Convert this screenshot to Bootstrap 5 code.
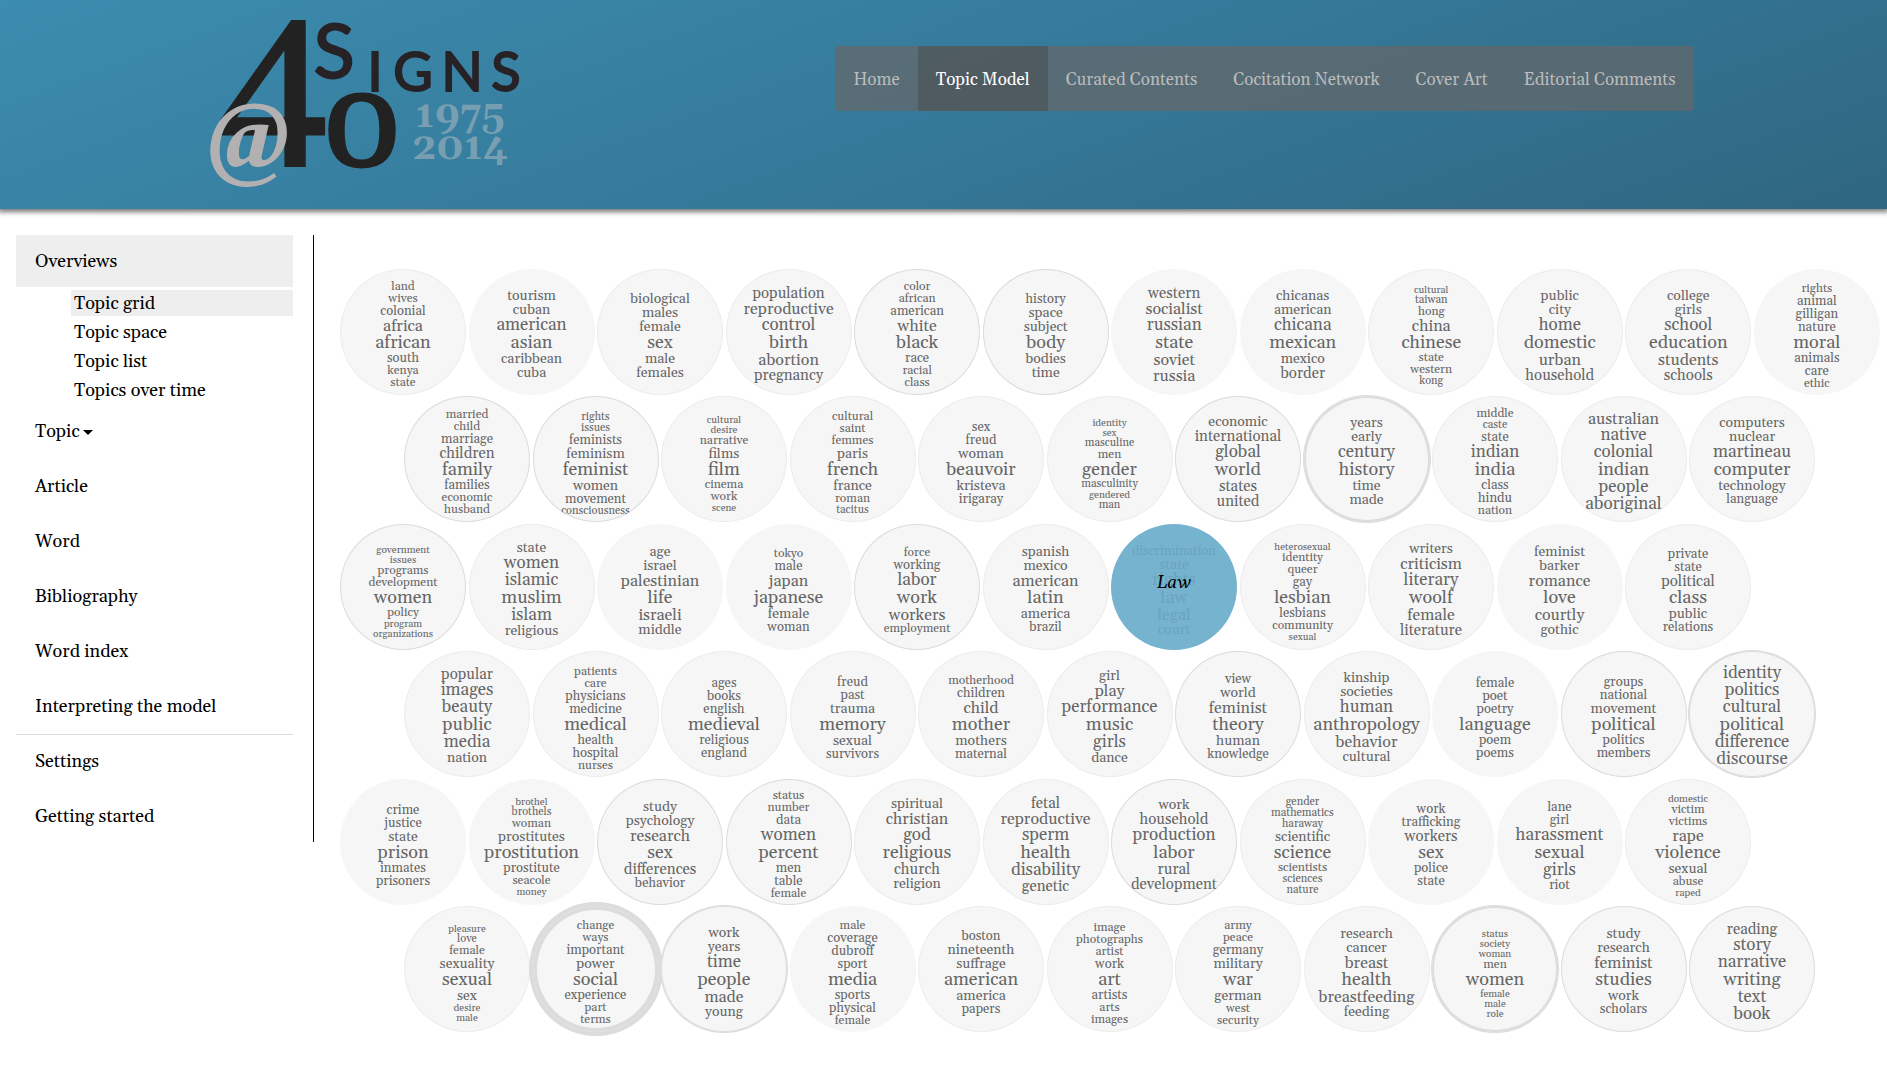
<!DOCTYPE html>
<html lang="en">
<head>
<meta charset="utf-8">
<meta name="viewport" content="width=device-width, initial-scale=1">
<title>Signs at 40: Topic Model</title>
<link href="https://cdn.jsdelivr.net/npm/bootstrap@5.3.0/dist/css/bootstrap.min.css" rel="stylesheet">
<style>
body { font-family: Georgia, Gelasio, "Liberation Serif", serif; font-size: 18px; color: #000; overflow-x: hidden; }
.masthead { height: 209px; background: linear-gradient(160deg, #3c8caf 0%, #357a9a 50%, #2f6680 100%); box-shadow: 0 1px 5px 2px #777; }
.masthead-inner { max-width: 1500px; }
.site-nav { margin-top: 46px; background: rgba(102, 102, 102, .7); border-radius: 4px; }
.site-nav .nav-link { font-size: 17px; line-height: 24px; padding: 22px 18px 19px; color: #bbb; }
.site-nav .nav-link.active { color: #fff; background: rgba(68, 68, 68, .4); }
.logo-years { font-family: Georgia, Gelasio, serif; font-variant-numeric: oldstyle-nums; }
.page { padding: 26px 0 32px; }
.side { width: 314px; padding: 0 20px 0 16px; border-right: 1px solid #000; height: 607px; }
.side .nav-link { color: #000; line-height: 20px; padding: 16px 19px; margin-bottom: 3px; }
.side .nav-link.active { background: #eee; padding: 17px 19px 15px; }
.side .sub .nav-link { padding: 4px 3px 2px; margin-left: 55px; }
.side hr { margin: -2px 0 1px; border-color: #ddd; opacity: 1; }
.caret { display: inline-block; border: 5px solid transparent; border-top-color: #000; border-bottom: 0; margin-left: 3px; vertical-align: 2px; }
.bubbles { margin: 34px 7px 0 26px; height: 763px; }
.bubble-row.offset-row { padding: 0 65px 0 64px; }
.bubble-row.short-row { padding-right: 129px; }
.topic { flex: none; width: 126px; height: 126px; position: relative; border-radius: 50%; background: #f6f6f6; color: #666; text-align: center; text-decoration: none; }
.ring-1 { box-shadow: inset 0 0 0 1px #ededed; }
.ring-2 { box-shadow: inset 0 0 0 1px #dcdcdc; }
.ring-3 { box-shadow: inset 0 0 0 1px #dcdcdc, 0 0 0 1px #dcdcdc; }
.ring-4 { box-shadow: inset 0 0 0 2px #dcdcdc, 0 0 0 1px #dcdcdc; }
.ring-7 { box-shadow: inset 0 0 0 4px #dcdcdc, 0 0 0 4px #dcdcdc; }
.words { height: 126px; border-radius: 50%; overflow: hidden; }
.above { height: 83px; }
.words span { display: block; line-height: 1; white-space: nowrap; }
.f10 { font-size: 10px; } .f11 { font-size: 11px; } .f12 { font-size: 12px; } .f13 { font-size: 13px; }
.f14 { font-size: 14px; } .f15 { font-size: 15px; } .f16 { font-size: 16px; } .f17 { font-size: 17px; } .f18 { font-size: 18px; }
.hovered { background: #76b3cf; color: #6ba4be; }
.topic-name { inset: 0; padding-bottom: 6px; color: #000; font-size: 17px; }
</style>
<script src="https://cdn.jsdelivr.net/npm/bootstrap@5.3.0/dist/js/bootstrap.bundle.min.js" defer></script>
</head>
<body>
<header class="masthead position-relative">
  <div class="masthead-inner container-fluid p-0 d-flex justify-content-between align-items-start">
    <a href="#" class="d-block" aria-label="Signs at 40">
      <svg width="340" height="205" viewBox="190 0 340 205" class="d-block" font-family="Liberation Serif, serif">
        <text x="214" y="165" font-size="218" fill="#222" stroke="#222" stroke-width="3">4</text>
        <text x="320" y="166" font-size="152" fill="#222" stroke="#222" stroke-width="3">o</text>
        <text x="204" y="168" font-size="98" font-style="italic" font-weight="bold" fill="#b3b0b2">@</text>
        <g font-family="Lato, sans-serif" fill="#262226" stroke="#262226" stroke-width="2" text-anchor="middle">
          <text x="330" y="78" font-size="76">S</text>
          <text x="371" y="91" font-size="54">I</text>
          <text x="409" y="91" font-size="54">G</text>
          <text x="458" y="91" font-size="54">N</text>
          <text x="502" y="91" font-size="54">S</text>
        </g>
        <g class="logo-years" font-size="39" font-weight="bold" fill="#789eb2" text-anchor="middle">
          <text x="456" y="127">1975</text>
          <text x="456" y="159">2014</text>
        </g>
      </svg>
    </a>
    <nav class="site-nav nav overflow-hidden" aria-label="Main">
      <a class="nav-link" href="#">Home</a>
      <a class="nav-link active" aria-current="page" href="#">Topic Model</a>
      <a class="nav-link" href="#">Curated Contents</a>
      <a class="nav-link" href="#">Cocitation Network</a>
      <a class="nav-link" href="#">Cover Art</a>
      <a class="nav-link" href="#">Editorial Comments</a>
    </nav>
  </div>
</header>
<div class="page d-flex align-items-start">
  <nav class="side flex-shrink-0 nav flex-column flex-nowrap" aria-label="Model views">
    <a class="nav-link active" href="#">Overviews</a>
    <div class="sub">
      <a class="nav-link active" href="#">Topic grid</a>
      <a class="nav-link" href="#">Topic space</a>
      <a class="nav-link" href="#">Topic list</a>
      <a class="nav-link" href="#">Topics over time</a>
    </div>
    <a class="nav-link" href="#">Topic<span class="caret"></span></a>
    <a class="nav-link" href="#">Article</a>
    <a class="nav-link" href="#">Word</a>
    <a class="nav-link" href="#">Bibliography</a>
    <a class="nav-link" href="#">Word index</a>
    <a class="nav-link" href="#">Interpreting the model</a>
    <hr>
    <a class="nav-link" href="#">Settings</a>
    <a class="nav-link" href="#">Getting started</a>
  </nav>
  <main class="bubbles flex-grow-1 d-flex flex-column justify-content-between" id="bubbles"></main>
</div>
<script>
// One line per topic: ring weight, then each word with its size; size 18 is the topic's top word.
const rows = [
`1 land 12 wives 12 colonial 13 africa 16 african 18 south 13 kenya 12 state 12
0 tourism 14 cuban 14 american 17 asian 18 caribbean 14 cuba 14
1 biological 14 males 14 female 14 sex 18 male 14 females 14
1 population 15 reproductive 16 control 17 birth 18 abortion 16 pregnancy 15
2 color 12 african 12 american 13 white 16 black 18 race 13 racial 12 class 12
2 history 13 space 14 subject 14 body 18 bodies 14 time 14
0 western 15 socialist 16 russian 17 state 18 soviet 16 russia 16
0 chicanas 14 american 14 chicana 17 mexican 18 mexico 14 border 15
1 cultural 10 taiwan 11 hong 12 china 16 chinese 18 state 12 western 12 kong 11
1 public 14 city 14 home 17 domestic 18 urban 16 household 15
1 college 14 girls 14 school 17 education 18 students 16 schools 15
0 rights 12 animal 13 gilligan 13 nature 13 moral 18 animals 13 care 13 ethic 12`,
`2 married 12 child 12 marriage 13 children 15 family 18 families 13 economic 12 husband 12
2 rights 11 issues 11 feminists 13 feminism 14 feminist 18 women 14 movement 13 consciousness 11
1 cultural 10 desire 10 narrative 12 films 14 film 18 cinema 12 work 12 scene 10
1 cultural 12 saint 12 femmes 12 paris 14 french 18 france 14 roman 12 tacitus 11
1 sex 13 freud 13 woman 14 beauvoir 18 kristeva 14 irigaray 13
1 identity 10 sex 10 masculine 11 men 12 gender 18 masculinity 11 gendered 10 man 11
2 economic 14 international 15 global 17 world 18 states 15 united 15
4 years 14 early 14 century 17 history 18 time 14 made 14
1 middle 12 caste 11 state 13 indian 17 india 18 class 13 hindu 13 nation 12
1 australian 16 native 17 colonial 17 indian 18 people 17 aboriginal 17
1 computers 14 nuclear 14 martineau 17 computer 18 technology 14 language 13`,
`2 government 10 issues 10 programs 12 development 12 women 18 policy 12 program 10 organizations 10
1 state 14 women 17 islamic 17 muslim 18 islam 17 religious 14
0 age 14 israel 14 palestinian 16 life 18 israeli 16 middle 14
0 tokyo 12 male 13 japan 16 japanese 18 female 14 woman 13
2 force 12 working 13 labor 17 work 18 workers 16 employment 12
1 spanish 14 mexico 14 american 16 latin 18 america 14 brazil 13
H discrimination 13 state 14 rights 17 law 18 legal 16 court 14
1 heterosexual 10 identity 12 queer 12 gay 13 lesbian 18 lesbians 13 community 12 sexual 10
1 writers 14 criticism 16 literary 17 woolf 18 female 16 literature 15
0 feminist 14 barker 14 romance 16 love 18 courtly 16 gothic 14
1 private 13 state 13 political 15 class 18 public 14 relations 13`,
`1 popular 15 images 17 beauty 17 public 18 media 17 nation 14
1 patients 12 care 12 physicians 13 medicine 13 medical 18 health 13 hospital 13 nurses 12
1 ages 13 books 13 english 13 medieval 18 religious 13 england 13
1 freud 13 past 13 trauma 14 memory 18 sexual 14 survivors 13
1 motherhood 12 children 13 child 16 mother 18 mothers 14 maternal 13
1 girl 14 play 16 performance 17 music 18 girls 17 dance 14
2 view 13 world 14 feminist 16 theory 18 human 14 knowledge 13
1 kinship 14 societies 14 human 17 anthropology 18 behavior 16 cultural 14
0 female 13 poet 13 poetry 13 language 18 poem 13 poems 13
2 groups 13 national 13 movement 14 political 18 politics 13 members 13
3 identity 17 politics 17 cultural 17 political 18 difference 17 discourse 17`,
`0 crime 13 justice 13 state 14 prison 18 inmates 13 prisoners 13
0 brothel 10 brothels 11 woman 12 prostitutes 14 prostitution 18 prostitute 13 seacole 12 money 10
2 study 14 psychology 14 research 16 sex 18 differences 15 behavior 13
2 status 12 number 12 data 13 women 17 percent 18 men 13 table 13 female 12
1 spiritual 14 christian 16 god 17 religious 18 church 15 religion 14
1 fetal 15 reproductive 16 sperm 17 health 18 disability 17 genetic 15
2 work 14 household 15 production 17 labor 18 rural 15 development 15
1 gender 11 mathematics 11 haraway 11 scientific 14 science 18 scientists 12 sciences 11 nature 11
0 work 13 trafficking 13 workers 15 sex 18 police 13 state 13
0 lane 13 girl 13 harassment 17 sexual 18 girls 17 riot 13
1 domestic 10 victim 12 victims 12 rape 16 violence 18 sexual 14 abuse 12 raped 10`,
`1 pleasure 10 love 11 female 12 sexuality 14 sexual 18 sex 14 desire 10 male 10
7 change 12 ways 12 important 13 power 14 social 18 experience 13 part 12 terms 12
3 work 14 years 14 time 17 people 18 made 16 young 14
0 male 12 coverage 13 dubroff 13 sport 13 media 18 sports 13 physical 13 female 12
1 boston 13 nineteenth 14 suffrage 14 american 18 america 14 papers 13
1 image 12 photographs 12 artist 12 work 13 art 18 artists 13 arts 12 images 12
1 army 12 peace 12 germany 13 military 14 war 18 german 14 west 12 security 12
1 research 14 cancer 14 breast 16 health 18 breastfeeding 16 feeding 14
4 status 10 society 10 woman 10 men 12 women 18 female 10 male 10 role 10
2 study 14 research 14 feminist 16 studies 18 work 14 scholars 13
2 reading 15 story 17 narrative 17 writing 18 text 17 book 17`];

document.getElementById('bubbles').innerHTML = rows.map((row, n) => {
  const topics = row.split('\n');
  const kind = n % 2 ? 'offset-row' : topics.length < 12 ? 'short-row' : '';
  return `<div class="bubble-row d-flex justify-content-between ${kind}">` + topics.map(line => {
    const [ring, ...t] = line.split(' ');
    let above = '', below = '', past = false;
    for (let i = 0; i < t.length; i += 2) {
      const s = `<span class="f${t[i + 1]}">${t[i]}</span>`;
      if (past) below += s; else above += s;
      if (t[i + 1] === '18') past = true;
    }
    const cls = ring === 'H' ? 'hovered' : 'ring-' + ring;
    const name = ring === 'H' ? '<em class="topic-name position-absolute d-flex align-items-center justify-content-center">Law</em>' : '';
    return `<a href="#" class="topic ${cls}"><div class="words"><div class="above d-flex flex-column justify-content-end">${above}</div>${below}</div>${name}</a>`;
  }).join('') + '</div>';
}).join('');
</script>
</body>
</html>
